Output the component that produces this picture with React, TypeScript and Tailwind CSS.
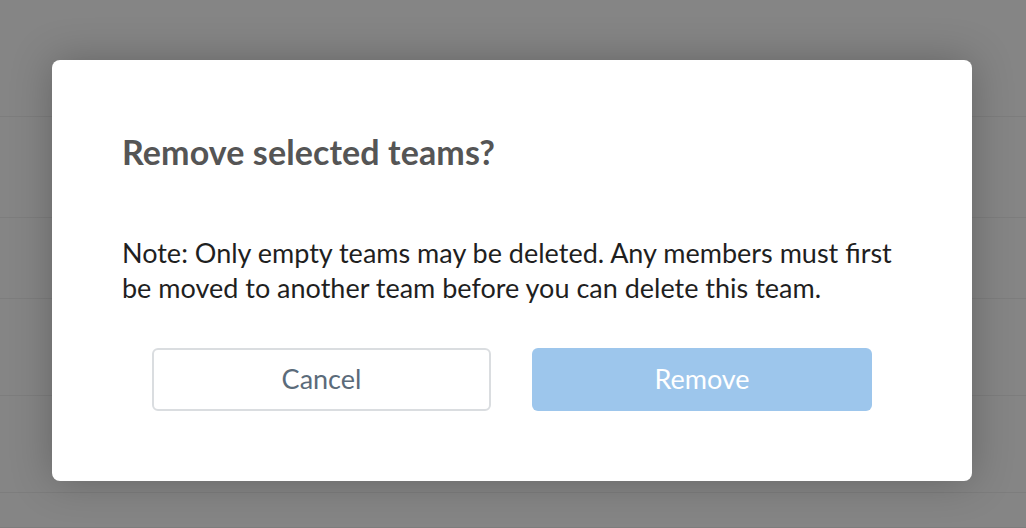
import React from "react";

const rows = ["h-[117px]", "h-[101px]", "h-[81px]", "h-[97px]", "h-[97px]", "h-[35px]"];

export default function App() {
  return (
    <div className="relative w-[1026px] h-[528px] overflow-hidden bg-white font-['Lato',sans-serif]">
      {/* table rows behind the overlay */}
      <div className="flex flex-col">
        {rows.map((h, i) => (
          <div key={i} className={`${h} border-b border-[#f0f0f0]`} />
        ))}
      </div>

      {/* overlay */}
      <div className="absolute inset-0 bg-black/[0.48] flex items-start justify-start pt-[60px] pl-[52px]">
        <div className="w-[920px] h-[421px] bg-white rounded-[8px] shadow-[0_0_40px_rgba(0,0,0,0.25)] px-[70px] pt-[72px] flex flex-col">
          <h2 className="text-[34px] leading-[40px] font-bold text-[#555555] tracking-[0.1px]">Remove selected teams?</h2>
          <p className="mt-[63px] text-[27px] leading-[35px] text-[#1f1f1f] whitespace-nowrap">
            Note: Only empty teams may be deleted. Any members must first
            <br />
            be moved to another team before you can delete this team.
          </p>
          <div className="mt-[43px] flex gap-[41px] px-[30px]">
            <button className="w-[339px] h-[63px] rounded-[6px] border-2 border-[#dadde0] bg-white text-[27px] text-[#5b6b7a]">
              Cancel
            </button>
            <button className="w-[340px] h-[63px] rounded-[6px] bg-[#9dc6ec] text-[27px] text-white">
              Remove
            </button>
          </div>
        </div>
      </div>
    </div>
  );
}
